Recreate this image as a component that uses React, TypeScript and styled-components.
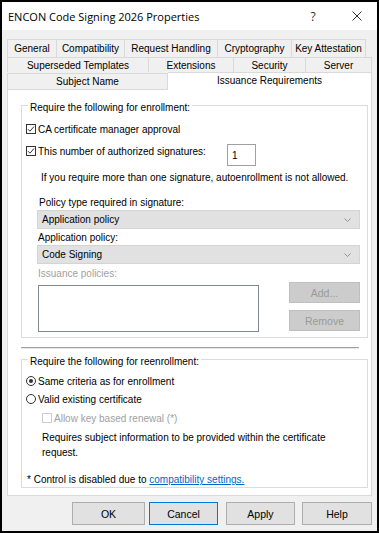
import styled, { createGlobalStyle } from 'styled-components';

const GlobalStyle = createGlobalStyle`
  html, body {
    margin: 0;
    padding: 0;
    background: #fff;
  }
  body {
    font-family: "Liberation Sans", Arial, sans-serif;
    font-size: 10px;
    color: #000;
  }
  * {
    box-sizing: border-box;
  }
`;

const Window = styled.div`
  width: 379px;
  height: 533px;
  border: 2px solid #000;
  background: #f0f0f0;
  display: flex;
  flex-direction: column;
`;

const TitleBar = styled.div`
  height: 28px;
  flex: none;
  background: #fff;
  display: flex;
  align-items: center;
`;

const Title = styled.div`
  flex: 1;
  padding-left: 6px;
  font-family: "Open Sans", "Liberation Sans", sans-serif;
  font-size: 11px;
  color: #000;
`;

const TitleButton = styled.div<{ $w: number }>`
  width: ${(p) => p.$w}px;
  height: 28px;
  display: flex;
  align-items: center;
  justify-content: center;
  font-family: "Open Sans", "Liberation Sans", sans-serif;
  font-size: 12px;
  color: #333;
`;

const Body = styled.div`
  flex: 1;
  display: flex;
  flex-direction: column;
  padding: 9px 5px 6px 5px;
`;

const TabRow = styled.div<{ $h: number }>`
  display: flex;
  align-items: flex-end;
  height: ${(p) => p.$h}px;
  flex: none;
`;

const Tab = styled.div<{ $w: number; $active?: boolean }>`
  width: ${(p) => p.$w}px;
  height: ${(p) => (p.$active ? 'calc(100% + 1px)' : '100%')};
  margin-bottom: ${(p) => (p.$active ? '-1px' : '0')};
  position: relative;
  z-index: ${(p) => (p.$active ? 1 : 0)};
  display: flex;
  align-items: center;
  justify-content: center;
  padding-bottom: ${(p) => (p.$active ? '2px' : '0')};
  background: ${(p) => (p.$active ? '#fff' : '#f0f0f0')};
  border-top: 1px solid #d9d9d9;
  border-right: 1px solid #d9d9d9;
  white-space: nowrap;

  &:first-child {
    border-left: 1px solid #d9d9d9;
  }
`;

const Panel = styled.div`
  height: 407px;
  flex: none;
  background: #fff;
  border: 1px solid #d9d9d9;
  padding: 6px 3px 7px 13px;
  display: flex;
  flex-direction: column;
`;

const Group = styled.fieldset<{ $pb: number }>`
  margin: 0;
  padding: 0 0 ${(p) => p.$pb}px 0;
  border: 1px solid #dcdcdc;
  min-width: 0;
  display: flex;
  flex-direction: column;
`;

const Legend = styled.legend`
  margin-left: 6px;
  padding: 6px 2px 0;
  line-height: 12px;
`;

const OptionRow = styled.div<{ $mt: number; $ml: number }>`
  display: flex;
  align-items: center;
  height: 16px;
  margin-top: ${(p) => p.$mt}px;
  margin-left: ${(p) => p.$ml}px;
  gap: 2px;
`;

const OptionLabel = styled.span<{ $disabled?: boolean; $w?: number }>`
  color: ${(p) => (p.$disabled ? '#a0a0a0' : '#000')};
  width: ${(p) => (p.$w ? `${p.$w}px` : 'auto')};
  white-space: nowrap;
`;

const Box = styled.span<{ $disabled?: boolean }>`
  width: 10px;
  height: 10px;
  flex: none;
  border: 1px solid ${(p) => (p.$disabled ? '#cccccc' : '#333')};
  background: #fff;
  display: flex;
  align-items: center;
  justify-content: center;
`;

const Radio = styled.span<{ $on?: boolean }>`
  width: 10px;
  height: 10px;
  flex: none;
  border: 1px solid #333;
  border-radius: 50%;
  display: flex;
  align-items: center;
  justify-content: center;

  &::after {
    content: '';
    width: 4px;
    height: 4px;
    border-radius: 50%;
    background: ${(p) => (p.$on ? '#333' : 'transparent')};
  }
`;

const SignatureRow = styled.div`
  display: flex;
  align-items: flex-start;
  margin-top: 6px;
  margin-left: 4px;
`;

const SignatureCheck = styled.div`
  display: flex;
  align-items: center;
  gap: 2px;
  height: 16px;
  width: 201px;
`;

const NumberInput = styled.div`
  width: 29px;
  height: 22px;
  margin-top: 1px;
  border: 1px solid #a0a0a0;
  background: #fff;
  padding-left: 4px;
  display: flex;
  align-items: center;
`;

const Text = styled.div<{ $mt: number; $ml: number; $lh?: number; $muted?: boolean }>`
  margin-top: ${(p) => p.$mt}px;
  margin-left: ${(p) => p.$ml}px;
  line-height: ${(p) => p.$lh ?? 14}px;
  color: ${(p) => (p.$muted ? '#a0a0a0' : '#000')};
`;

const Select = styled.div<{ $mt?: number }>`
  height: 19px;
  margin: ${(p) => p.$mt ?? 0}px 7px 0 15px;
  background: #e1e1e1;
  border: 1px solid #d4d4d4;
  display: flex;
  align-items: center;
  justify-content: space-between;
  padding: 0 8px 0 4px;
`;

const PolicyArea = styled.div`
  display: flex;
  justify-content: space-between;
  align-items: flex-start;
  margin: 1px 7px 0 16px;
`;

const ListBox = styled.div`
  width: 221px;
  height: 47px;
  margin-top: 3px;
  background: #fff;
  border: 1px solid #828790;
`;

const SideButtons = styled.div`
  display: flex;
  flex-direction: column;
  gap: 7px;
`;

const DisabledButton = styled.div`
  width: 71px;
  height: 21px;
  background: #cccccc;
  border: 1px solid #bfbfbf;
  color: #9a9a9a;
  font-size: 10.5px;
  display: flex;
  align-items: center;
  justify-content: center;
`;

const Separator = styled.div`
  height: 2px;
  flex: none;
  margin: 9px 9px 0 0;
  border-top: 1px solid #a0a0a0;
  border-bottom: 1px solid #e8e8e8;
`;

const Link = styled.span`
  color: #0066cc;
  text-decoration: underline;
`;

const ButtonBar = styled.div`
  display: flex;
  justify-content: flex-end;
  margin-top: 6px;
`;

const DialogButton = styled.div<{ $w: number; $ml: number; $focus?: boolean }>`
  width: ${(p) => p.$w}px;
  height: 23px;
  margin-left: ${(p) => p.$ml}px;
  background: #e1e1e1;
  border: 1px solid ${(p) => (p.$focus ? '#0078d7' : '#adadad')};
  font-size: 10.5px;
  display: flex;
  align-items: center;
  justify-content: center;
`;

const Check = () => (
  <svg width="8" height="8" viewBox="0 0 8 8">
    <polyline points="1,4.2 3,6.2 7,1.5" fill="none" stroke="#333" strokeWidth="1" />
  </svg>
);

const Chevron = () => (
  <svg width="7" height="4" viewBox="0 0 7 4">
    <polyline points="0.5,0.5 3.5,3.5 6.5,0.5" fill="none" stroke="#8a8a8a" strokeWidth="0.9" />
  </svg>
);

const CloseIcon = () => (
  <svg width="10" height="10" viewBox="0 0 10 10">
    <path d="M0.5 0.5 L9.5 9.5 M9.5 0.5 L0.5 9.5" stroke="#333" strokeWidth="1" />
  </svg>
);

const tabRows = [
  { h: 18, tabs: [['General', 50], ['Compatibility', 68], ['Request Handling', 93], ['Cryptography', 74], ['Key Attestation', 74]] },
  { h: 15, tabs: [['Superseded Templates', 142], ['Extensions', 85], ['Security', 72], ['Server', 66]] },
] as const;

const App = (): JSX.Element => {
  return (
    <>
      <GlobalStyle />
      <Window>
        <TitleBar>
          <Title>ENCON Code Signing 2026 Properties</Title>
          <TitleButton $w={48}>?</TitleButton>
          <TitleButton $w={40}>
            <CloseIcon />
          </TitleButton>
        </TitleBar>
        <Body>
          {tabRows.map((row, i) => (
            <TabRow key={i} $h={row.h}>
              {row.tabs.map(([label, w]) => (
                <Tab key={label} $w={w}>
                  {label}
                </Tab>
              ))}
            </TabRow>
          ))}
          <TabRow $h={17}>
            <Tab $w={161} style={{ height: 16 }}>Subject Name</Tab>
            <Tab $w={204} $active>
              Issuance Requirements
            </Tab>
          </TabRow>
          <Panel>
            <Group $pb={5}>
              <Legend>Require the following for enrollment:</Legend>
              <OptionRow $mt={7} $ml={4}>
                <Box>
                  <Check />
                </Box>
                <OptionLabel>CA certificate manager approval</OptionLabel>
              </OptionRow>
              <SignatureRow>
                <SignatureCheck>
                  <Box>
                    <Check />
                  </Box>
                  <OptionLabel>This number of authorized signatures:</OptionLabel>
                </SignatureCheck>
                <NumberInput>1</NumberInput>
              </SignatureRow>
              <Text $mt={5} $ml={19}>
                If you require more than one signature, autoenrollment is not allowed.
              </Text>
              <Text $mt={11} $ml={17}>
                Policy type required in signature:
              </Text>
              <Select>
                <span>Application policy</span>
                <Chevron />
              </Select>
              <Text $mt={2} $ml={16}>
                Application policy:
              </Text>
              <Select>
                <span>Code Signing</span>
                <Chevron />
              </Select>
              <Text $mt={3} $ml={16} $muted>
                Issuance policies:
              </Text>
              <PolicyArea>
                <ListBox />
                <SideButtons>
                  <DisabledButton>Add...</DisabledButton>
                  <DisabledButton>Remove</DisabledButton>
                </SideButtons>
              </PolicyArea>
            </Group>
            <Separator />
            <Group $pb={1} style={{ marginTop: 1 }}>
              <Legend>Require the following for reenrollment:</Legend>
              <OptionRow $mt={5} $ml={4}>
                <Radio $on />
                <OptionLabel>Same criteria as for enrollment</OptionLabel>
              </OptionRow>
              <OptionRow $mt={2} $ml={4}>
                <Radio />
                <OptionLabel>Valid existing certificate</OptionLabel>
              </OptionRow>
              <OptionRow $mt={3} $ml={20}>
                <Box $disabled />
                <OptionLabel $disabled>Allow key based renewal (*)</OptionLabel>
              </OptionRow>
              <Text $mt={4} $ml={20} $lh={15}>
                Requires subject information to be provided within the certificate
                <br />
                request.
              </Text>
              <Text $mt={14} $ml={5} $lh={12}>
                * Control is disabled due to <Link>compatibility settings.</Link>
              </Text>
            </Group>
          </Panel>
          <ButtonBar>
            <DialogButton $w={73} $ml={0}>OK</DialogButton>
            <DialogButton $w={69} $ml={4} $focus>Cancel</DialogButton>
            <DialogButton $w={69} $ml={8}>Apply</DialogButton>
            <DialogButton $w={70} $ml={7}>Help</DialogButton>
          </ButtonBar>
        </Body>
      </Window>
    </>
  );
};

export default App;
